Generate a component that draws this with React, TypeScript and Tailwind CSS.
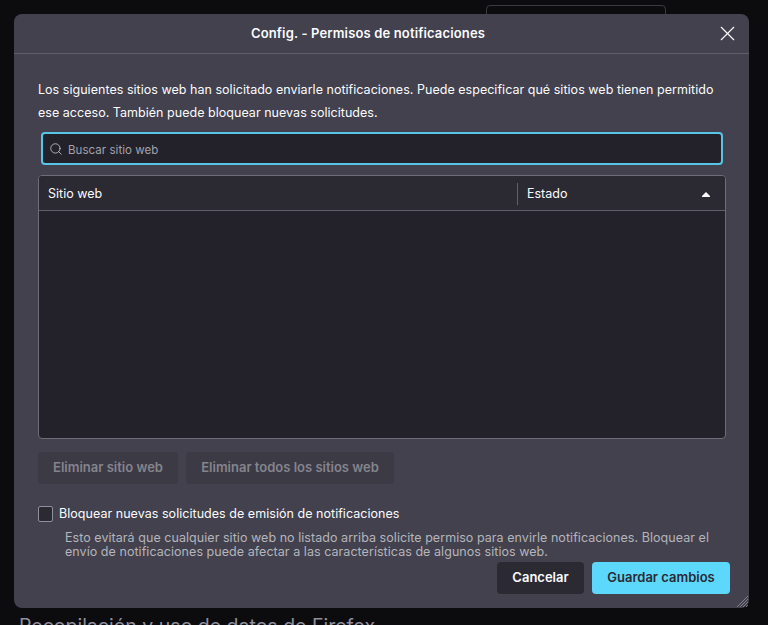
import { Search, X } from 'lucide-react'

const font = { fontFamily: 'Inter, "Noto Sans", sans-serif' }

export default function App() {
  return (
    <div className="relative h-[625px] w-[768px] overflow-hidden bg-[#0c0c0f]" style={font}>
      {/* page behind the modal */}
      <div className="absolute left-[486px] top-[5px] h-[20px] w-[180px] rounded-[4px] border border-[#3a3a40]" />
      <div className="absolute left-[19px] top-[612px] text-[19.5px] leading-[28px] text-[#8f8f9d]">
        Recopilación y uso de datos de Firefox
      </div>

      <div className="absolute left-[14px] top-[14px] flex h-[594px] w-[735px] flex-col rounded-[8px] bg-[#42414d] text-[#fbfbfe]">
        <div className="relative flex h-[40px] shrink-0 items-center justify-center border-b border-[#5f5e69] pr-[27px]">
          <h1 className="text-[13px] font-semibold tracking-[0.15px]">Config. - Permisos de notificaciones</h1>
          <button className="absolute right-[9px] top-[7px] text-[#fbfbfe]">
            <X size={25} strokeWidth={1.1} />
          </button>
        </div>

        <div className="flex flex-1 flex-col px-[24px] pt-[24px]">
          <p className="text-[12.5px] leading-[23px] tracking-[0.03px]">
            Los siguientes sitios web han solicitado enviarle notificaciones. Puede especificar qué sitios web tienen permitido ese acceso. También puede bloquear nuevas solicitudes.
          </p>

          <div className="ml-[3px] mt-[8px] flex h-[33px] w-[682px] items-center gap-[5px] rounded-[4px] border-2 border-[#56c5e6] bg-[#23222b] pl-[6px]">
            <Search size={14} strokeWidth={1.4} className="text-[#c9c9d0]" />
            <span className="mt-[4px] text-[11.5px] tracking-[0.05px] text-[#a3a3ab]">Buscar sitio web</span>
          </div>

          <div className="mt-[10px] flex h-[264px] w-[688px] flex-col overflow-hidden rounded-[4px] border border-[#6f6e78] bg-[#23222b]">
            <div className="flex h-[35px] shrink-0 items-center border-b border-[#5f5e69] bg-[#2b2a33] pt-[2px] text-[12.5px]">
              <div className="w-[478px] pl-[9px]">Sitio web</div>
              <div className="h-[22px] w-px bg-[#5f5e69]" />
              <div className="flex flex-1 items-center justify-between pl-[9px] pr-[14px]">
                <span>Estado</span>
                <svg width="10" height="5" viewBox="0 0 10 5" className="fill-[#fbfbfe]">
                  <path d="M5 0 L9 4 Q9.5 5 8.5 5 L1.5 5 Q0.5 5 1 4 Z" />
                </svg>
              </div>
            </div>
          </div>

          <div className="mt-[13px] flex gap-[8px]">
            <button className="h-[32px] w-[140px] rounded-[4px] bg-[#3b3a45] text-[13px] font-semibold text-[#85848d]">
              Eliminar sitio web
            </button>
            <button className="h-[32px] w-[208px] rounded-[4px] bg-[#3b3a45] text-[13px] font-semibold text-[#85848d]">
              Eliminar todos los sitios web
            </button>
          </div>

          <label className="mt-[21px] flex items-center gap-[6px] text-[12.5px] tracking-[0.04px]">
            <span className="h-[16px] w-[15px] rounded-[2px] border border-[#8f8f9d] bg-[#2b2a33]" />
            Bloquear nuevas solicitudes de emisión de notificaciones
          </label>

          <p className="ml-[27px] mt-[7px] text-[12.5px] leading-[14px] tracking-[0.05px] text-[#b5b5bb]">
            Esto evitará que cualquier sitio web no listado arriba solicite permiso para envirle notificaciones. Bloquear el envío de notificaciones puede afectar a las características de algunos sitios web.
          </p>

          <div className="mt-[3px] flex justify-end gap-[8px]">
            <button className="h-[32px] w-[87px] rounded-[4px] bg-[#2b2a33] text-[13px] font-semibold">Cancelar</button>
            <button className="-mr-[5px] h-[32px] w-[138px] rounded-[4px] bg-[#5cd8fc] text-[13px] font-semibold text-[#2b2a33]">
              Guardar cambios
            </button>
          </div>
        </div>

        {/* resize grip */}
        <svg width="12" height="12" viewBox="0 0 12 12" className="absolute bottom-[1px] right-[1px] stroke-[#8f8f9d]">
          <path d="M12 1 L1 12 M12 4 L4 12 M12 7 L7 12 M12 10 L10 12" strokeWidth="0.8" />
        </svg>
      </div>
    </div>
  )
}
